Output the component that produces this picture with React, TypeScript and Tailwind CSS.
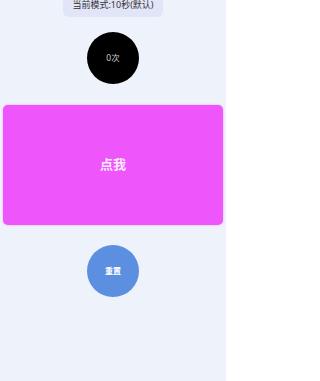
export default function App() {
  return (
    <div className="min-h-[381px] w-[226px] bg-[#eef2fb] flex flex-col items-center font-['Noto_Sans','Noto_Sans_CJK_SC',sans-serif] overflow-hidden">
      <div className="-mt-[8px] h-[25px] px-[9px] flex items-center rounded-[6px] bg-[#e2e5f8]">
        <span className="text-[9px] leading-none text-[#333]">当前模式:10秒(默认)</span>
      </div>
      <button className="mt-[15px] w-[52px] h-[52px] rounded-full bg-black flex items-center justify-center">
        <span className="text-[8.5px] text-[#cfcfcf]">0次</span>
      </button>
      <button className="mt-[21px] w-[220px] h-[120px] rounded-[5px] bg-[#ee55fb] shadow-[0_0_2px_rgba(238,85,251,0.6)] flex items-center justify-center">
        <span className="text-[13px] font-bold text-[#fbeafd]">点我</span>
      </button>
      <button className="mt-[20px] w-[52px] h-[52px] rounded-full bg-[#5d8fe0] flex items-center justify-center">
        <span className="text-[8px] font-bold text-white">重置</span>
      </button>
    </div>
  );
}
